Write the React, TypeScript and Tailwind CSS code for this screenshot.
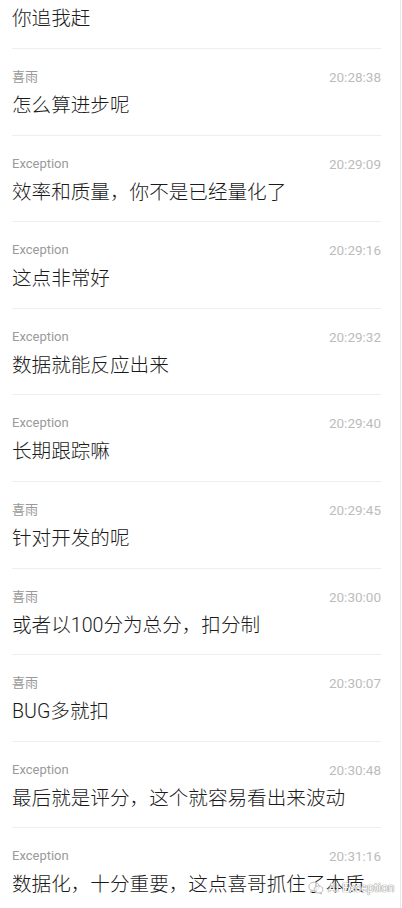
import React from "react";

type Msg = { name: string; time: string; text: string };

const rows: Msg[] = [
  { name: "", time: "", text: "你追我赶" },
  { name: "喜雨", time: "20:28:38", text: "怎么算进步呢" },
  { name: "Exception", time: "20:29:09", text: "效率和质量，你不是已经量化了" },
  { name: "Exception", time: "20:29:16", text: "这点非常好" },
  { name: "Exception", time: "20:29:32", text: "数据就能反应出来" },
  { name: "Exception", time: "20:29:40", text: "长期跟踪嘛" },
  { name: "喜雨", time: "20:29:45", text: "针对开发的呢" },
  { name: "喜雨", time: "20:30:00", text: "或者以100分为总分，扣分制" },
  { name: "喜雨", time: "20:30:07", text: "BUG多就扣" },
  { name: "Exception", time: "20:30:48", text: "最后就是评分，这个就容易看出来波动" },
  { name: "Exception", time: "20:31:16", text: "数据化，十分重要，这点喜哥抓住了本质" },
];

const font = { fontFamily: "Roboto, 'Noto Sans CJK SC', sans-serif" };

function Row({ m, first }: { m: Msg; first?: boolean }) {
  return (
    <div
      className={`h-[86.6px] shrink-0 border-b border-[#eeeeee] flex flex-col ${first ? "-mt-[37.6px]" : ""}`}
    >
      <div className="mt-[20px] h-[16px] flex items-center justify-between">
        <span className="text-[13px] text-[#9a9a9a] leading-[16px]">{m.name}</span>
        <span className="text-[13.5px] text-[#bcbcbc] leading-[16px]">{m.time}</span>
      </div>
      <div className="mt-[8px] h-[26px] flex items-center">
        <span className="text-[19.6px] text-[#1a1a1a] leading-[26px] whitespace-nowrap font-light">{m.text}</span>
      </div>
    </div>
  );
}

export default function App() {
  return (
    <div className="w-[402px] h-[908px] overflow-hidden bg-white relative" style={font}>
      <div className="w-[401px] h-[908px] border-r border-[#e8e8e8] overflow-hidden">
        <div className="ml-3 mr-[19px] flex flex-col">
          {rows.map((m, i) => (
            <Row key={i} m={m} first={i === 0} />
          ))}
        </div>
      </div>
      <div className="absolute left-[308px] top-[881px] flex items-center gap-[4px]">
        <svg width="16" height="14" viewBox="0 0 16 14" fill="none" stroke="#bdbdbd" strokeWidth="1">
          <ellipse cx="6" cy="5.5" rx="5.2" ry="4.3" fill="white" fillOpacity="0.6" />
          <path d="M3 9.2 L2.5 11.5 L5 9.8" />
          <ellipse cx="10.5" cy="8.5" rx="4.3" ry="3.5" fill="white" fillOpacity="0.6" />
          <path d="M13 11.5 L13.6 13.2 L11.8 12" />
        </svg>
        <span className="text-[12px] text-white leading-[14px] [text-shadow:0_0_1px_#777,0_0_1px_#777]">
          AI Exception
        </span>
      </div>
    </div>
  );
}
